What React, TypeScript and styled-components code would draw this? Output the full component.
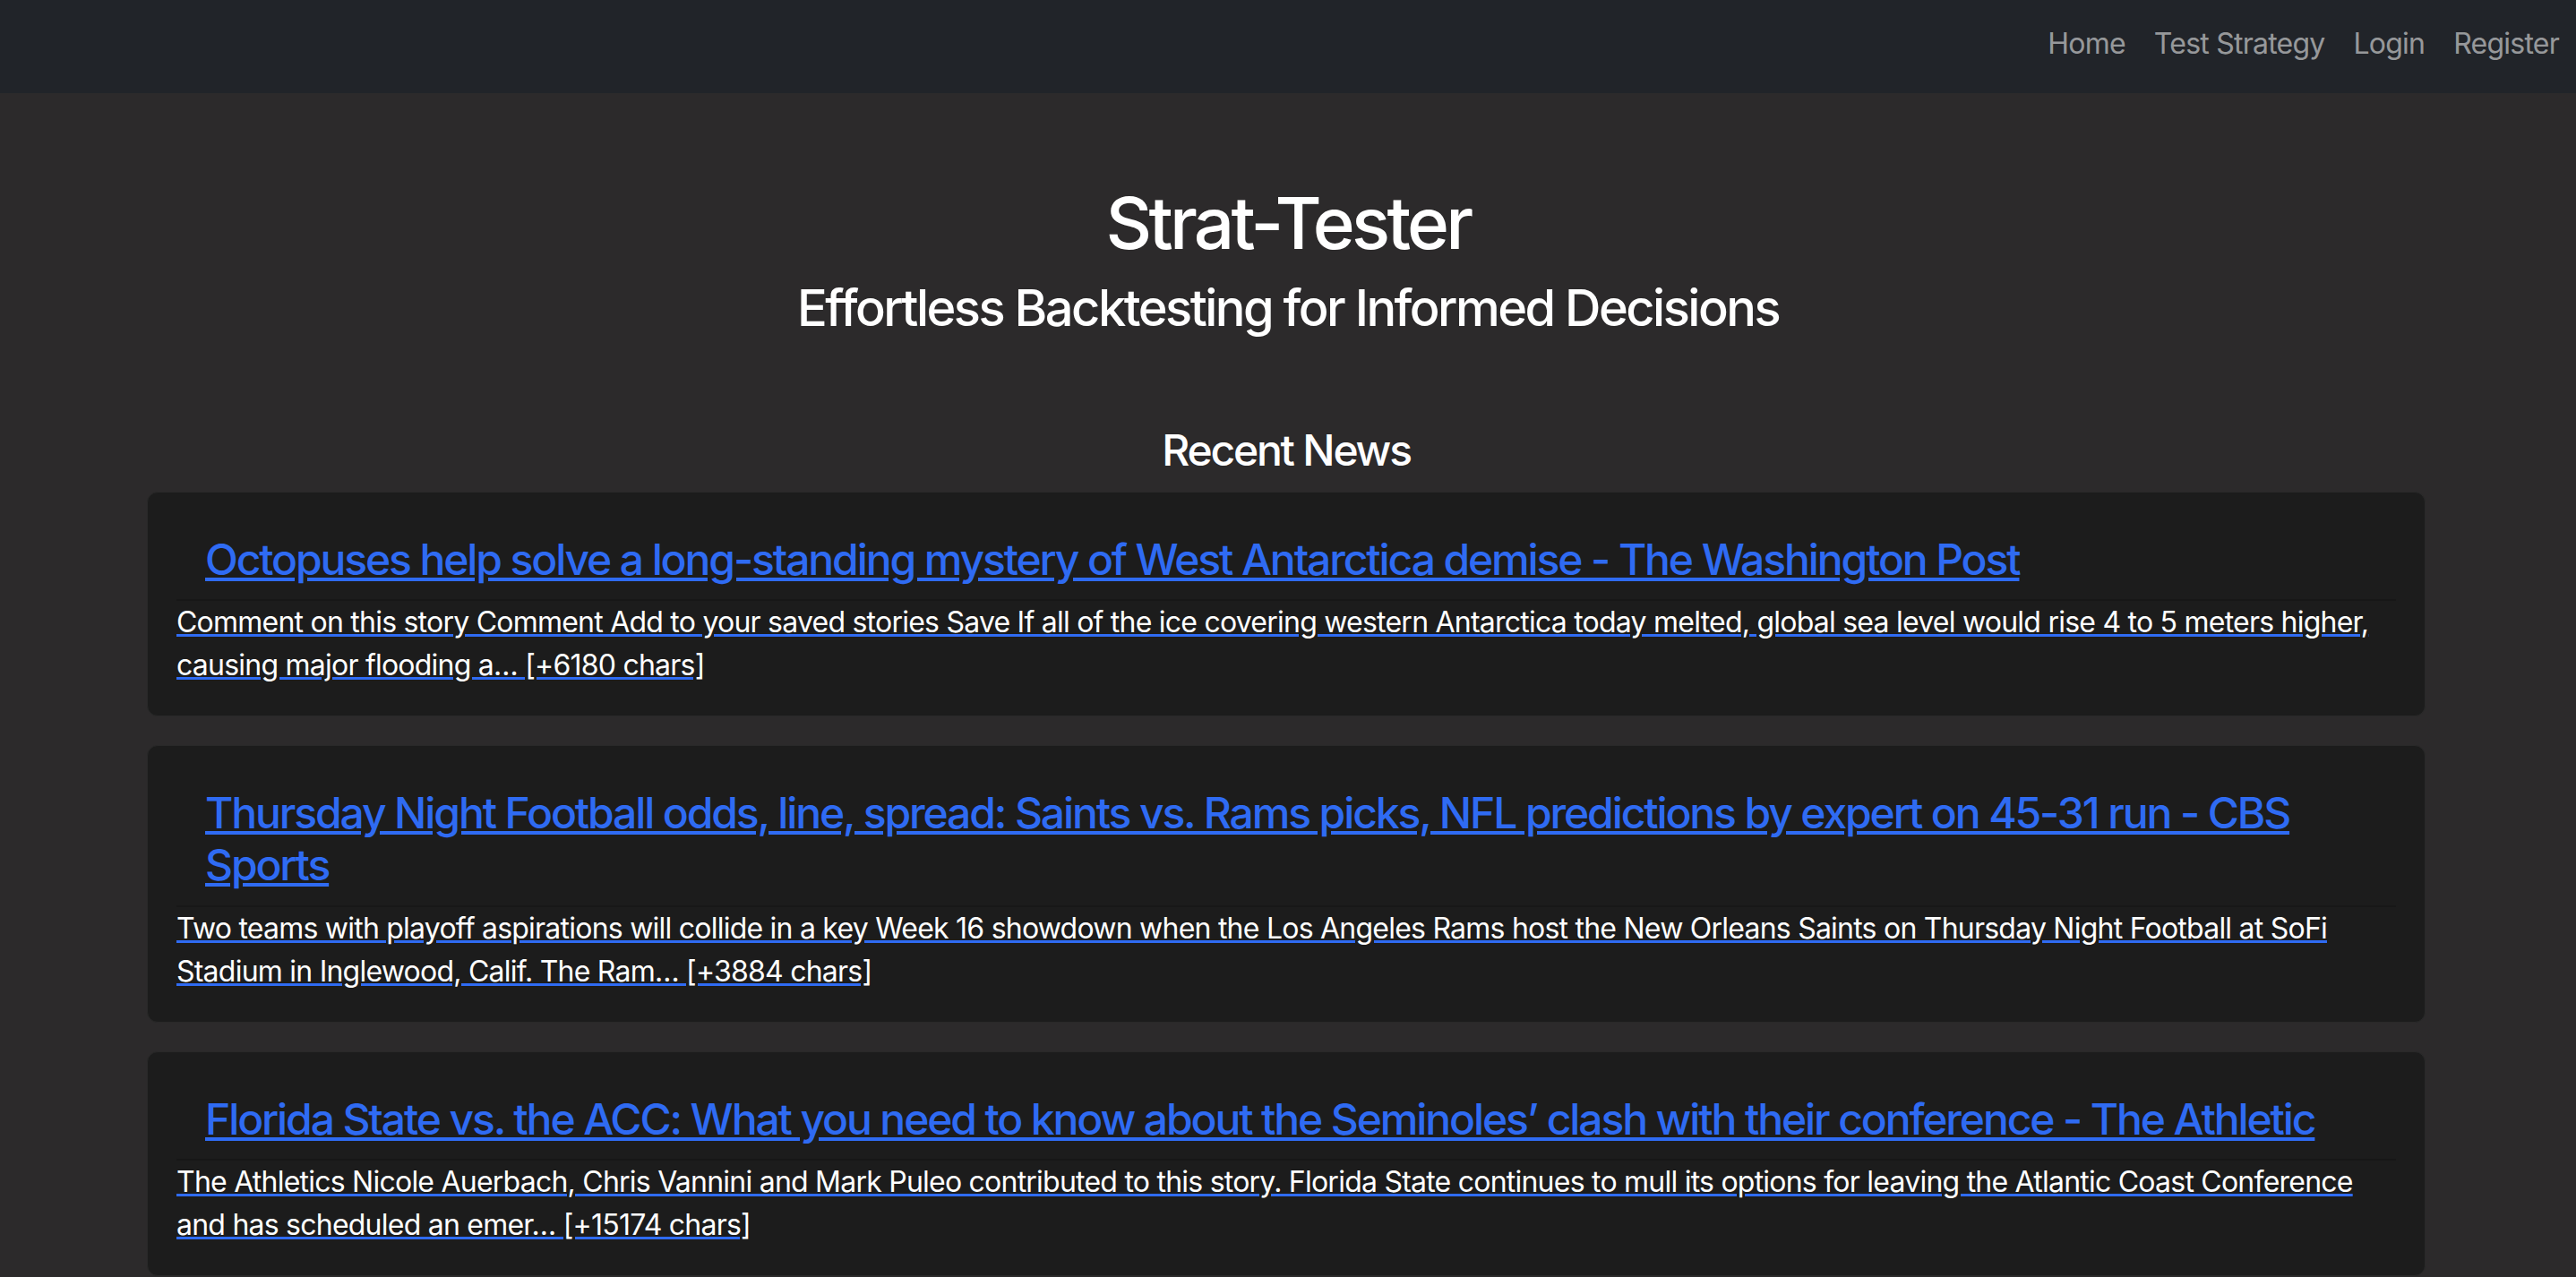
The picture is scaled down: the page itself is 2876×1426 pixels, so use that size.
import React from "react";
import styled, { createGlobalStyle } from "styled-components";

type NewsItem = {
  title: string;
  summary: string;
};

const news: NewsItem[] = [
  {
    title:
      "Octopuses help solve a long-standing mystery of West Antarctica demise - The Washington Post",
    summary:
      "Comment on this story Comment Add to your saved stories Save If all of the ice covering western Antarctica today melted, global sea level would rise 4 to 5 meters higher, causing major flooding a… [+6180 chars]",
  },
  {
    title:
      "Thursday Night Football odds, line, spread: Saints vs. Rams picks, NFL predictions by expert on 45-31 run - CBS Sports",
    summary:
      "Two teams with playoff aspirations will collide in a key Week 16 showdown when the Los Angeles Rams host the New Orleans Saints on Thursday Night Football at SoFi Stadium in Inglewood, Calif. The Ram… [+3884 chars]",
  },
  {
    title:
      "Florida State vs. the ACC: What you need to know about the Seminoles’ clash with their conference - The Athletic",
    summary:
      "The Athletics Nicole Auerbach, Chris Vannini and Mark Puleo contributed to this story. Florida State continues to mull its options for leaving the Atlantic Coast Conference and has scheduled an emer… [+15174 chars]",
  },
];

const GlobalStyle = createGlobalStyle`
  * {
    box-sizing: border-box;
  }
  body {
    margin: 0;
    background: #2c2a2b;
    color: #ffffff;
    font-family: Inter, "Noto Sans", "Liberation Sans", sans-serif;
    font-size: 32px;
    line-height: 1.5;
    letter-spacing: -0.024em;
  }
`;

const NavBar = styled.nav`
  height: 104px;
  background: #212429;
  display: flex;
  align-items: center;
  justify-content: flex-end;
  padding: 0 3px 0 24px;
`;

const NavLink = styled.a`
  color: rgba(255, 255, 255, 0.55);
  text-decoration: none;
  font-size: 32px;
  line-height: 48px;
  padding: 0 16px;
  margin-top: -6px;
`;

const Hero = styled.header`
  text-align: center;
  padding-top: 97px;
`;

const Title = styled.h1`
  margin: 0 0 14px;
  font-size: 80px;
  font-weight: 500;
  line-height: 1.2;
  letter-spacing: -0.047em;
`;

const Subtitle = styled.h3`
  margin: 0;
  font-size: 56px;
  font-weight: 500;
  line-height: 1.2;
  letter-spacing: -0.045em;
`;

const Section = styled.section`
  width: 2544px;
  margin: 0 0 0 164px;
  padding-top: 96px;
`;

const SectionTitle = styled.h4`
  margin: 0 0 17px;
  text-align: center;
  font-size: 48px;
  font-weight: 500;
  line-height: 1.2;
  letter-spacing: -0.046em;
`;

const Card = styled.article`
  background: #1c1c1c;
  border: 1px solid #292929;
  border-radius: 12px;
  padding: 32px;
  margin-bottom: 32px;
`;

const CardHeader = styled.h4`
  margin: 0;
  padding: 14px 32px 16px;
  border-bottom: 2px solid #171717;
  font-size: 48px;
  font-weight: 500;
  line-height: 1.2;
  letter-spacing: -0.044em;
`;

const HeadlineLink = styled.a`
  color: #2f6bf3;
  text-decoration: underline;
`;

const SummaryLink = styled.a`
  display: block;
  color: #ffffff;
  text-decoration: underline;
  text-decoration-color: #2f6bf3;
  font-size: 32px;
  line-height: 48px;
`;

export default function App() {
  return (
    <>
      <GlobalStyle />
      <NavBar>
        <NavLink href="#">Home</NavLink>
        <NavLink href="#">Test Strategy</NavLink>
        <NavLink href="#">Login</NavLink>
        <NavLink href="#">Register</NavLink>
      </NavBar>
      <Hero>
        <Title>Strat-Tester</Title>
        <Subtitle>Effortless Backtesting for Informed Decisions</Subtitle>
      </Hero>
      <Section>
        <SectionTitle>Recent News</SectionTitle>
        {news.map((item) => (
          <Card key={item.title}>
            <CardHeader>
              <HeadlineLink href="#">{item.title}</HeadlineLink>
            </CardHeader>
            <SummaryLink href="#">{item.summary}</SummaryLink>
          </Card>
        ))}
      </Section>
    </>
  );
}
